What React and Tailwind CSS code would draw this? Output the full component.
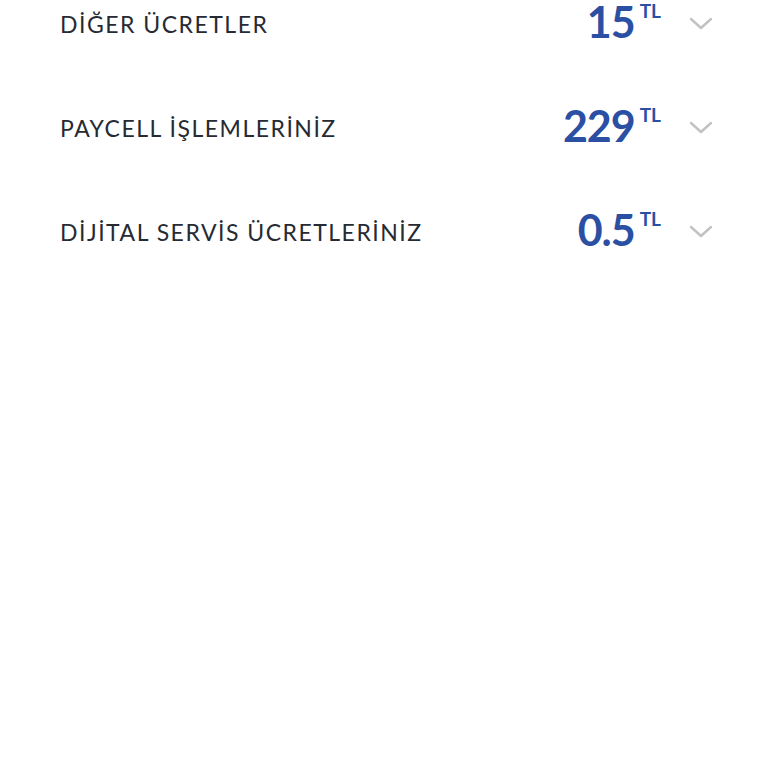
import React from 'react';

const rows = [
    { label: 'DİĞER ÜCRETLER', amount: '15' },
    { label: 'PAYCELL İŞLEMLERİNİZ', amount: '229' },
    { label: 'DİJİTAL SERVİS ÜCRETLERİNİZ', amount: '0.5' },
];

const Chevron = () => (
    <svg width="24" height="14" viewBox="0 0 24 14" fill="none" className="text-[#c2c2c2]">
        <polyline points="2,2 12,11 22,2" stroke="currentColor" strokeWidth="2.4" strokeLinecap="round" strokeLinejoin="round" />
    </svg>
);

const FeeRow = ({ label, amount }) => (
    <div className="flex h-[104px] items-center justify-between">
        {/* Label */}
        <div className="pt-[6px] text-[23px] leading-none tracking-[1.5px] text-[#262a33]">
            {label}
        </div>

        {/* Amount + chevron */}
        <div className="flex items-center">
            <div className="flex items-start text-[#2a4fa3] font-bold">
                <span className="text-[43px] leading-none tracking-[-1px]">{amount}</span>
                <span className="ml-[5px] mt-[1px] text-[19px] leading-none">TL</span>
            </div>
            <div className="ml-[28px] pt-[6px]">
                <Chevron />
            </div>
        </div>
    </div>
);

export default function App() {
    return (
        <div className="min-h-screen bg-white font-['Lato',sans-serif]">
            <div className="-mt-[31px] pl-[60px] pr-[55px]">
                {rows.map((row) => (
                    <FeeRow key={row.label} {...row} />
                ))}
            </div>
        </div>
    );
}
